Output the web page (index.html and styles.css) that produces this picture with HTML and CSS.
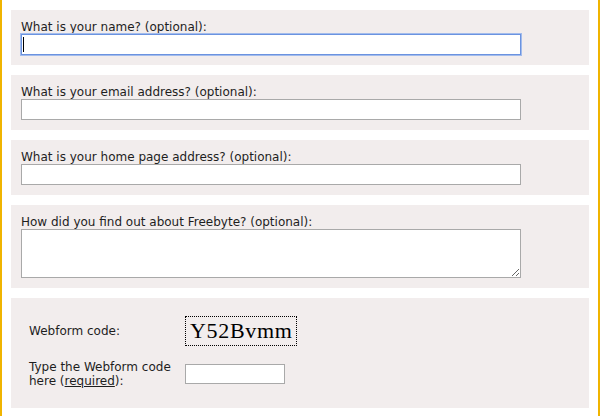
FILE: index.html
```html
<!DOCTYPE html>
<html>
<head>
<meta charset="utf-8">
<link rel="stylesheet" href="styles.css">
</head>
<body>
<div class="frame">
  <div class="panel">
    <label class="label" for="name">What is your name? (optional):</label>
    <div class="field-wrap">
      <input id="name" class="text focused" type="text">
      <span class="caret"></span>
    </div>
  </div>
  <div class="panel">
    <label class="label" for="email">What is your email address? (optional):</label>
    <input id="email" class="text" type="text">
  </div>
  <div class="panel">
    <label class="label" for="home">What is your home page address? (optional):</label>
    <input id="home" class="text" type="text">
  </div>
  <div class="panel">
    <label class="label" for="found">How did you find out about Freebyte? (optional):</label>
    <textarea id="found" class="area"></textarea>
  </div>
  <div class="panel captcha">
    <div class="cap-label">Webform code:</div>
    <div><span class="code">Y52Bvmm</span></div>
    <div class="cap-label">Type the Webform code here (<a class="req" href="#">required</a>):</div>
    <div><input class="code-input" type="text"></div>
  </div>
</div>
</body>
</html>
```
FILE: styles.css
```css
html, body {
  margin: 0;
  padding: 0;
  background: #ffffff;
}
body {
  font-family: "DejaVu Sans", Verdana, sans-serif;
  font-size: 12px;
  color: #1e1e1e;
}
.frame {
  width: 600px;
  height: 416px;
  box-sizing: border-box;
  border-left: 2px solid #f0b400;
  border-right: 2px solid #f0b400;
  padding: 10px 9px 0 9px;
  overflow: hidden;
}
.panel {
  background: #f2eded;
  padding: 10px;
  margin-bottom: 10px;
}
.label {
  display: block;
  height: 14px;
  line-height: 14px;
}
.field-wrap {
  position: relative;
  width: 500px;
  height: 21px;
}
.text {
  display: block;
  box-sizing: border-box;
  width: 500px;
  height: 21px;
  margin: 0;
  padding: 1px 2px;
  border: 1px solid #a9a9a9;
  background: #fff;
  font: 12px "DejaVu Sans", sans-serif;
  outline: none;
}
.text.focused {
  border: 1px solid #6b93e0;
  box-shadow: 0 0 0 1px #a3bcec;
}
.caret {
  position: absolute;
  left: 2px;
  top: 3px;
  width: 1px;
  height: 15px;
  background: #000;
}
.area {
  display: block;
  box-sizing: border-box;
  width: 500px;
  height: 49px;
  margin: 0;
  padding: 2px;
  border: 1px solid #a9a9a9;
  background: #fff;
  font: 12px "DejaVu Sans", sans-serif;
}
.captcha {
  display: grid;
  grid-template-columns: 146px auto;
  column-gap: 10px;
  row-gap: 14px;
  align-items: center;
  padding: 18px 18px 20px 18px;
}
.cap-label {
  line-height: 14px;
}
.req {
  color: inherit;
  text-decoration: underline;
}
.code {
  display: inline-block;
  vertical-align: top;
  border: 1px dotted #000;
  padding: 0 3px 0 4px;
  font-family: "Liberation Serif", "Times New Roman", serif;
  font-size: 22px;
  letter-spacing: 0.7px;
  line-height: 28px;
  color: #000;
}
.code-input {
  display: block;
  box-sizing: border-box;
  width: 100px;
  height: 20px;
  margin: 0;
  padding: 1px 2px;
  border: 1px solid #a9a9a9;
  background: #fff;
}
```
